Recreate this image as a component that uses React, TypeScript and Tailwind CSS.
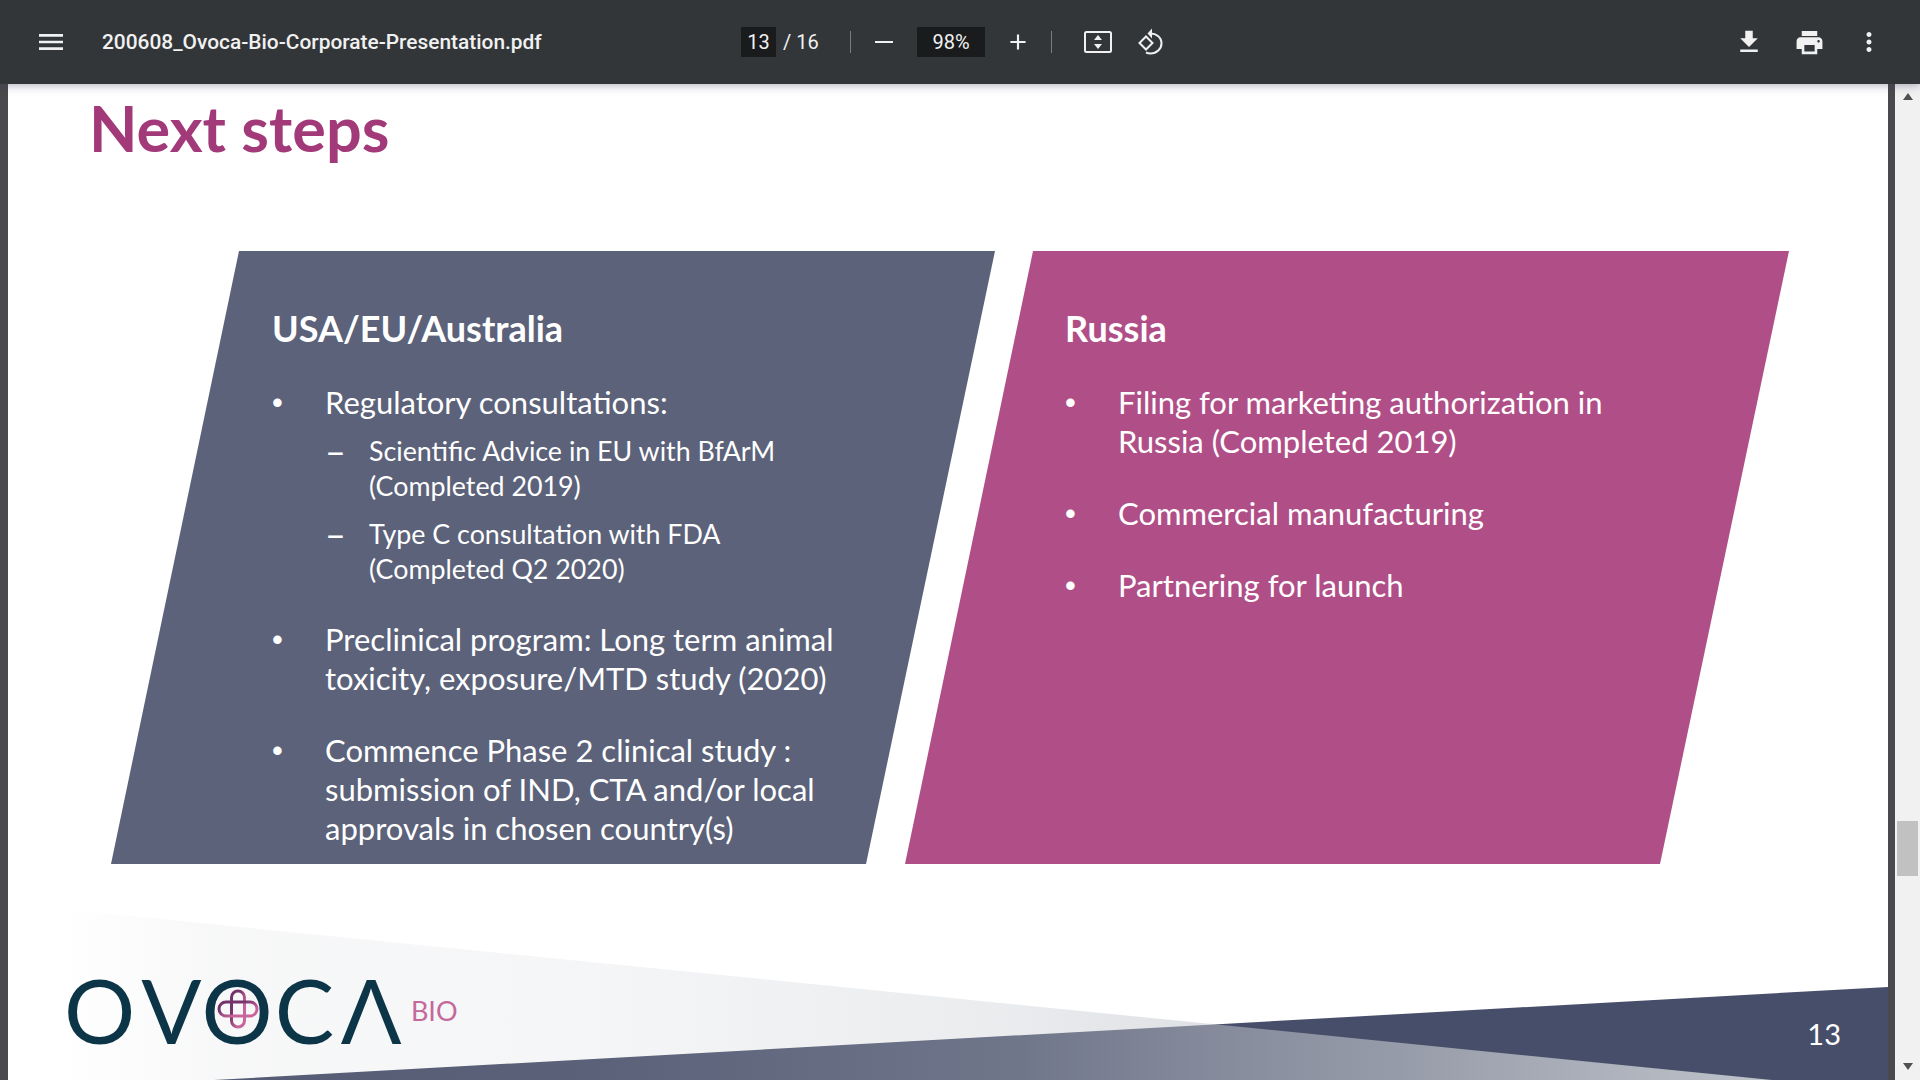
import type { ReactNode } from 'react';

// PDF viewer toolbar icons
function Glyph({ d, size, className = '' }: { d: string; size: number; className?: string }) {
  return (
    <svg width={size} height={size} viewBox="0 0 24 24" fill="#f1f1f1" className={className}>
      <path d={d} />
    </svg>
  );
}

function Bullet({ children }: { children: ReactNode }) {
  return (
    <li className="flex">
      <span className="w-[53px] shrink-0 font-['Liberation_Sans',sans-serif]">•</span>
      <div>{children}</div>
    </li>
  );
}

function SubItem({ children }: { children: ReactNode }) {
  return (
    <li className="flex text-[26.8px] leading-[35px]">
      <span className="w-[44px] shrink-0 text-[36px]">–</span>
      <span>{children}</span>
    </li>
  );
}

function Panel({ title, className = '', children }: { title: string; className?: string; children: ReactNode }) {
  return (
    <section
      className={`h-[613px] w-[884px] shrink-0 pt-[57px] text-white [clip-path:polygon(128px_0,884px_0,755px_613px,0_613px)] ${className}`}
    >
      <h2 className="text-[36px] font-bold leading-[40px]">{title}</h2>
      <ul className="mt-[35px] flex flex-col gap-[33px] text-[31px] leading-[39px]">{children}</ul>
    </section>
  );
}

function Footer() {
  return (
    <div className="relative flex flex-1 items-start justify-between pl-[56px] pr-[47px]">
      <svg className="absolute inset-0 h-full w-full" viewBox="8 864 1880 216" preserveAspectRatio="none">
        <defs>
          <linearGradient id="wedge" gradientUnits="userSpaceOnUse" x1="60" y1="0" x2="1780" y2="0">
            <stop offset="0" stopColor="#c0c4cb" stopOpacity="0" />
            <stop offset="0.09" stopColor="#c0c4cb" stopOpacity="0.12" />
            <stop offset="0.31" stopColor="#c0c4cb" stopOpacity="0.16" />
            <stop offset="0.55" stopColor="#c0c4cb" stopOpacity="0.33" />
            <stop offset="0.66" stopColor="#c0c4cb" stopOpacity="0.5" />
            <stop offset="0.78" stopColor="#c0c4cb" stopOpacity="0.66" />
            <stop offset="1" stopColor="#c0c4cb" stopOpacity="1" />
          </linearGradient>
        </defs>
        <polygon points="214,1080 1888,987 1888,1080" fill="#474e69" />
        <polygon points="60,909 1772,1080 60,1080" fill="url(#wedge)" />
      </svg>
      <div className="relative mt-[102px] flex items-center text-[89px] leading-[87px] text-[#0c3548]">
        <span>O</span>
        <span className="ml-[6px]">V</span>
        <span className="relative">
          O
          <svg className="absolute left-[15px] top-[23px]" width="42" height="40" viewBox="0 0 42 40" fill="none" strokeWidth="3">
            <defs>
              <linearGradient id="clover" x1="0" y1="0" x2="1" y2="1">
                <stop offset="0.3" stopColor="#74336a" />
                <stop offset="0.7" stopColor="#c9659d" />
              </linearGradient>
            </defs>
            <rect x="14.5" y="2" width="13" height="36" rx="6.5" stroke="url(#clover)" />
            <rect x="2" y="13" width="38" height="14" rx="7" stroke="url(#clover)" />
          </svg>
        </span>
        <span className="ml-[2px]">C</span>
        <span className="ml-[7px] origin-left scale-x-[1.125] font-['Open_Sans',sans-serif] font-normal">Λ</span>
        <span className="ml-[16px] mt-[2px] text-[27px] leading-none text-[#c4689c]">BIO</span>
      </div>
      <span className="relative mt-[152px] text-[29px] font-normal leading-[36px] text-white">13</span>
    </div>
  );
}

export default function App() {
  return (
    <div className="flex h-screen w-full flex-col overflow-hidden bg-[#4a4a4c] font-['Lato',sans-serif]">
      <header className="relative z-10 flex h-[84px] shrink-0 items-center bg-[#323639] font-['Roboto',sans-serif] text-[#f1f1f1] shadow-[0_2px_8px_rgba(60,50,90,0.35)]">
        <Glyph size={32} className="ml-[35px]" d="M3 18h18v-2H3v2zm0-5h18v-2H3v2zm0-7v2h18V6H3z" />
        <span className="ml-[35px] w-[639px] pt-[1px] text-[20.9px] font-medium">200608_Ovoca-Bio-Corporate-Presentation.pdf</span>
        <span className="flex h-[30px] w-[35px] items-center justify-center bg-[#191b1c] text-[20px]">13</span>
        <span className="ml-[7px] w-[67px] text-[20px]">/ 16</span>
        <span className="h-[22px] w-[1px] bg-[#7a7d80]" />
        <span className="ml-[24px] h-[2px] w-[18px] bg-[#f1f1f1]" />
        <span className="ml-[24px] flex h-[30px] w-[68px] items-center justify-center bg-[#191b1c] text-[20px]">98%</span>
        <Glyph size={26} className="ml-[20px]" d="M19 13h-6v6h-2v-6H5v-2h6V5h2v6h6v2z" />
        <span className="ml-[20px] h-[22px] w-[1px] bg-[#7a7d80]" />
        <svg className="ml-[31px]" width="30" height="24" viewBox="0 0 30 24" fill="none">
          <rect x="2" y="2" width="26" height="20" rx="1.5" stroke="#f1f1f1" strokeWidth="2" />
          <path d="M15 5l4 5h-8zM15 19l4-5h-8z" fill="#f1f1f1" />
        </svg>
        <svg className="ml-[23px]" width="30" height="30" viewBox="0 0 30 30" fill="none" stroke="#f1f1f1" strokeWidth="2">
          <path d="M10 9.500l6.500 6.500-6.500 6.500-6.500-6.500z" />
          <path d="M13.500 6.500c6.500-.6 12 3.800 12 9.700s-5 10.300-11 10.300c-1.700 0-3.200-.4-4.500-1" />
          <path d="M16 1.500l-4.500 5 4.500 5" fill="#f1f1f1" stroke="none" />
        </svg>
        <span className="flex-1" />
        <Glyph size={30} className="mr-[30px]" d="M19 9h-4V3H9v6H5l7 7 7-7zM5 18v2h14v-2H5z" />
        <Glyph size={31} className="mr-[29px]" d="M19 8H5c-1.660 0-3 1.340-3 3v6h4v4h12v-4h4v-6c0-1.660-1.340-3-3-3zm-3 11H8v-5h8v5zm3-7c-.55 0-1-.45-1-1s.45-1 1-1 1 .45 1 1-.45 1-1 1zm-1-9H6v4h12V3z" />
        <Glyph size={30} className="mr-[36px]" d="M12 8c1.100 0 2-.9 2-2s-.9-2-2-2-2 .9-2 2 .9 2 2 2zm0 2c-1.100 0-2 .9-2 2s.9 2 2 2 2-.9 2-2-.9-2-2-2zm0 6c-1.100 0-2 .9-2 2s.9 2 2 2 2-.9 2-2-.9-2-2-2z" />
      </header>

      <div className="flex min-h-0 flex-1">
        <main className="ml-[8px] flex w-[1880px] shrink-0 flex-col bg-white">
          <h1 className="h-[167px] shrink-0 pl-[81px] pt-[12px] text-[63px] font-bold leading-[64px] text-[#a23a7a]">Next steps</h1>
          <div className="flex shrink-0 pl-[103px]">
            <Panel title="USA/EU/Australia" className="bg-[#5b6279] pl-[161px]">
              <Bullet>
                Regulatory consultations:
                <ul className="mt-[12px] flex flex-col gap-[13px]">
                  <SubItem>
                    Scientific Advice in EU with BfArM
                    <br />
                    (Completed 2019)
                  </SubItem>
                  <SubItem>
                    Type C consultation with FDA
                    <br />
                    (Completed Q2 2020)
                  </SubItem>
                </ul>
              </Bullet>
              <Bullet>
                Preclinical program: Long term animal
                <br />
                toxicity, exposure/MTD study (2020)
              </Bullet>
              <Bullet>
                Commence Phase 2 clinical study :
                <br />
                submission of IND, CTA and/or local
                <br />
                approvals in chosen country(s)
              </Bullet>
            </Panel>
            <Panel title="Russia" className="-ml-[90px] bg-[#b04f87] pl-[160px]">
              <Bullet>
                Filing for marketing authorization in
                <br />
                Russia (Completed 2019)
              </Bullet>
              <Bullet>Commercial manufacturing</Bullet>
              <Bullet>Partnering for launch</Bullet>
            </Panel>
          </div>
          <Footer />
        </main>

        <aside className="ml-[7px] flex w-[25px] flex-col items-center bg-[#f1f1f1]">
          <span className="mt-[9px] h-0 w-0 border-x-[5px] border-b-[7px] border-x-transparent border-b-[#505050]" />
          <span className="mt-[721px] h-[55px] w-[21px] bg-[#c1c1c1]" />
          <span className="mt-[187px] h-0 w-0 border-x-[5px] border-t-[7px] border-x-transparent border-t-[#505050]" />
        </aside>
      </div>
    </div>
  );
}
